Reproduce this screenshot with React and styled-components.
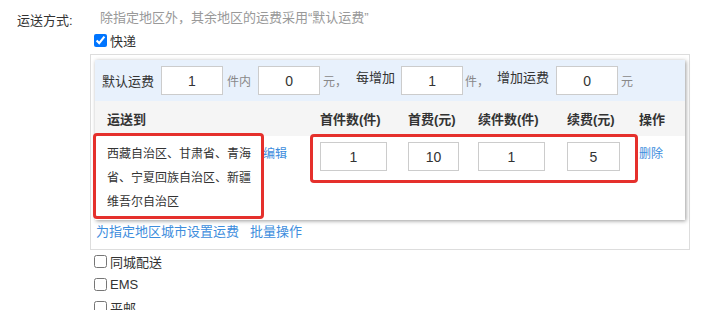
import React from 'react';
import styled, { createGlobalStyle } from 'styled-components';

const GlobalStyle = createGlobalStyle`
  body {
    margin: 0;
    background: #fff;
    font-family: "Liberation Sans", "Noto Sans CJK SC", sans-serif;
    color: #333;
  }
`;

const Form = styled.div`
  display: flex;
  padding-top: 8px;
`;

const FieldLabel = styled.div`
  width: 90px;
  box-sizing: border-box;
  padding-left: 17px;
  margin-top: 3px;
  font-size: 13px;
  line-height: 20px;
  color: #333;
`;

const FieldBody = styled.div`
  width: 600px;
`;

const Hint = styled.div`
  padding-left: 10px;
  font-size: 13px;
  line-height: 20px;
  color: #999;
`;

const CheckRow = styled.label`
  display: flex;
  align-items: center;
  height: ${props => props.h || 23}px;
  padding-left: 4px;
  font-size: 13px;
  color: #333;

  input {
    width: 13px;
    height: 13px;
    margin: 0 3px 0 0;
  }
`;

const Panel = styled.div`
  margin-top: 2px;
  width: 600px;
  box-sizing: border-box;
  border: 1px solid #ddd;
  padding: 5px 4px 0 4px;
`;

const Card = styled.div`
  position: relative;
  background: #fff;
  box-shadow: 1px 1px 4px rgba(0, 0, 0, 0.4);
`;

const DefaultBar = styled.div`
  display: flex;
  align-items: center;
  height: 41px;
  padding-left: 7px;
  background: #e8f1fc;
`;

const BarText = styled.span`
  margin-left: ${props => props.ml || 0}px;
  margin-bottom: ${props => (props.raised ? 8 : 0)}px;
  font-size: ${props => (props.muted ? 12 : 13)}px;
  color: ${props => (props.muted ? '#888' : '#333')};
  white-space: nowrap;
`;

const NumInput = styled.input`
  box-sizing: border-box;
  width: ${props => props.w}px;
  height: ${props => props.h || 29}px;
  margin: 0 0 0 ${props => props.ml || 0}px;
  padding: 0;
  border: 1px solid #ccc;
  background: #fff;
  text-align: center;
  font-family: "Liberation Sans", sans-serif;
  font-size: 14px;
  color: #333;
  outline: none;
`;

const columns = '213px 88px 70px 89px 72px 1fr';

const HeadRow = styled.div`
  display: grid;
  grid-template-columns: ${columns};
  align-items: center;
  height: 35px;
  padding-left: 12px;
  background: #f5f5f5;
  font-size: 13px;
  font-weight: bold;
  color: #333;
`;

const BodyRow = styled.div`
  display: grid;
  grid-template-columns: ${columns};
  align-items: start;
  height: 84px;
  box-sizing: border-box;
  padding: 6px 0 0 12px;
`;

const RegionCell = styled.div`
  display: flex;
  align-items: flex-start;
`;

const Regions = styled.div`
  width: 150px;
  font-size: 12px;
  line-height: 24px;
  color: #333;
`;

const Link = styled.a`
  margin-left: ${props => props.ml || 0}px;
  font-size: ${props => props.size || 13}px;
  line-height: ${props => (props.size === 12 ? '24px' : 'inherit')};
  color: #3d8ddd;
  text-decoration: none;
  cursor: pointer;
  white-space: nowrap;
`;

const LinkRow = styled.div`
  display: flex;
  gap: 11px;
  padding: 0 0 6px 1px;
  line-height: 23px;
`;

const Marker = styled.div`
  position: absolute;
  left: ${props => props.x}px;
  top: ${props => props.y}px;
  width: ${props => props.w}px;
  height: ${props => props.h}px;
  box-sizing: border-box;
  border: 3px solid #e5302c;
  border-radius: 4px;
  pointer-events: none;
`;

const headers = ['运送到', '首件数(件)', '首费(元)', '续件数(件)', '续费(元)', '操作'];

const rowInputs = [
  { value: '1', w: 67 },
  { value: '10', w: 51 },
  { value: '1', w: 67 },
  { value: '5', w: 53 }
];

const otherWays = ['同城配送', 'EMS', '平邮'];

export default function App() {
  return (
    <>
      <GlobalStyle />
      <Form>
        <FieldLabel>运送方式:</FieldLabel>
        <FieldBody>
          <Hint>除指定地区外，其余地区的运费采用“默认运费”</Hint>
          <CheckRow h={24}>
            <input type="checkbox" defaultChecked />
            快递
          </CheckRow>
          <Panel>
            <Card>
              <DefaultBar>
                <BarText>默认运费</BarText>
                <NumInput w={62} ml={7} defaultValue="1" />
                <BarText muted ml={4}>件内</BarText>
                <NumInput w={62} ml={7} defaultValue="0" />
                <BarText muted ml={3}>元，</BarText>
                <BarText raised ml={9}>每增加</BarText>
                <NumInput w={62} ml={6} defaultValue="1" />
                <BarText muted ml={2}>件，</BarText>
                <BarText raised ml={8}>增加运费</BarText>
                <NumInput w={62} ml={7} defaultValue="0" />
                <BarText muted ml={3}>元</BarText>
              </DefaultBar>
              <HeadRow>
                {headers.map(h => (
                  <span key={h}>{h}</span>
                ))}
              </HeadRow>
              <BodyRow>
                <RegionCell>
                  <Regions>西藏自治区、甘肃省、青海省、宁夏回族自治区、新疆维吾尔自治区</Regions>
                  <Link size={12} ml={6}>编辑</Link>
                </RegionCell>
                {rowInputs.map((item, i) => (
                  <div key={i}>
                    <NumInput w={item.w} defaultValue={item.value} />
                  </div>
                ))}
                <Link size={12}>删除</Link>
              </BodyRow>
              <Marker x={-2} y={73} w={171} h={86} />
              <Marker x={215} y={74} w={328} h={49} />
            </Card>
            <LinkRow>
              <Link>为指定地区城市设置运费</Link>
              <Link>批量操作</Link>
            </LinkRow>
          </Panel>
          {otherWays.map(way => (
            <CheckRow key={way}>
              <input type="checkbox" />
              {way}
            </CheckRow>
          ))}
        </FieldBody>
      </Form>
    </>
  );
}
